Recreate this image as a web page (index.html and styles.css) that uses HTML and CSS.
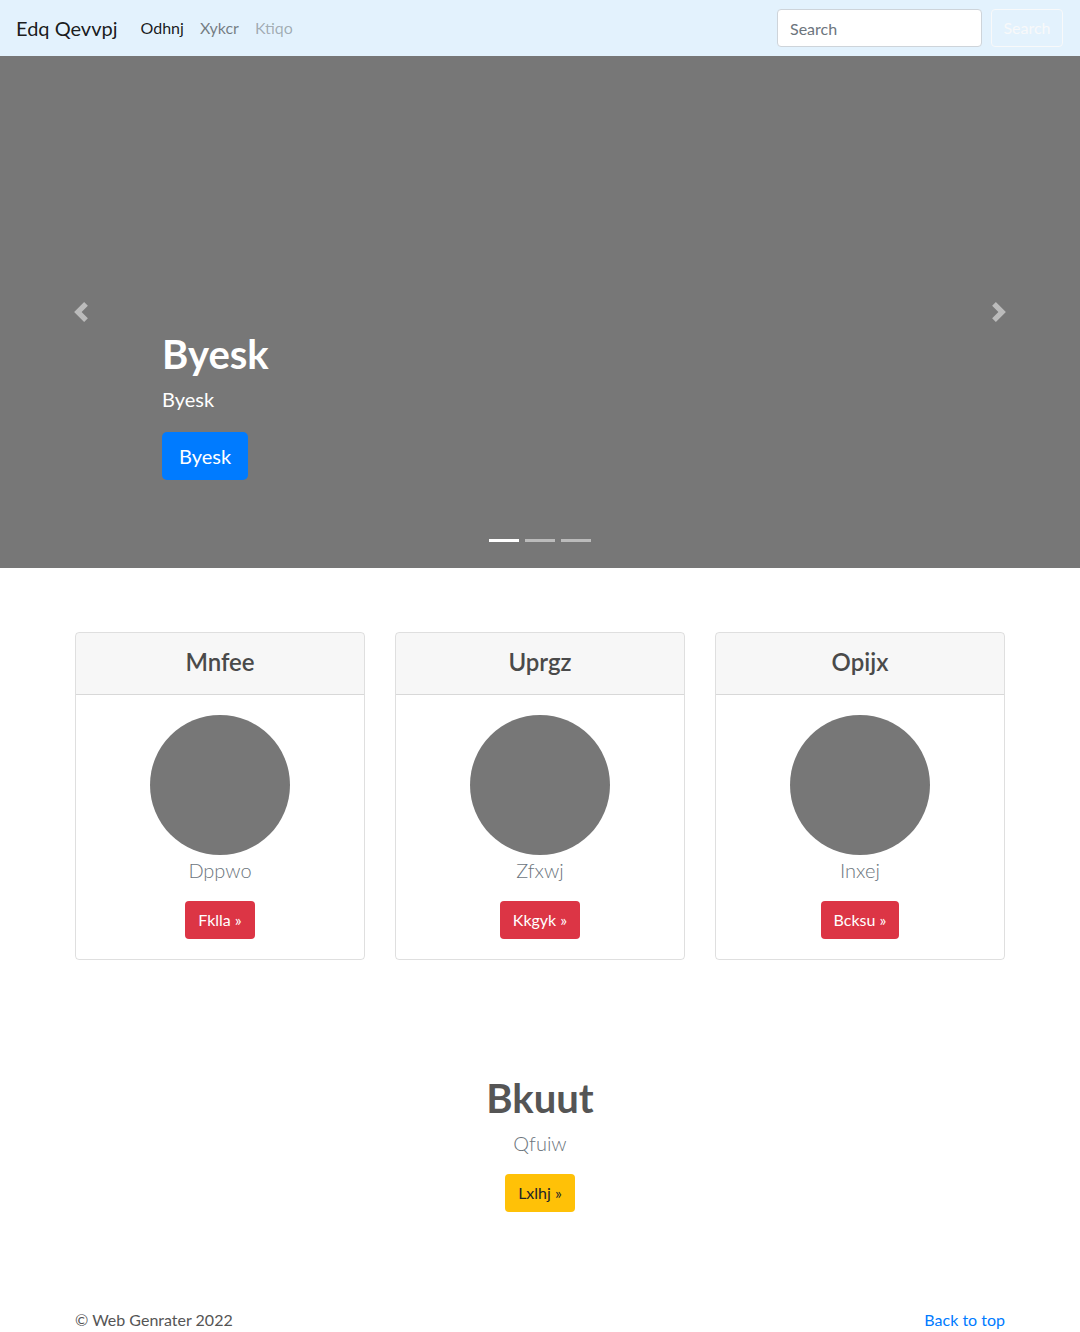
FILE: index.html
```html
<!DOCTYPE html>
<html lang="en">
<head>
<meta charset="utf-8">
<title>Edq Qevvpj</title>
<link rel="stylesheet" href="styles.css">
</head>
<body>
<nav class="navbar">
  <a class="brand" href="#">Edq Qevvpj</a>
  <ul class="nav">
    <li><a class="nav-link active" href="#">Odhnj</a></li>
    <li><a class="nav-link" href="#">Xykcr</a></li>
    <li><a class="nav-link disabled" href="#">Ktiqo</a></li>
  </ul>
  <form class="search">
    <input class="search-input" type="text" placeholder="Search">
    <button class="search-btn" type="button">Search</button>
  </form>
</nav>

<section class="carousel">
  <a class="control prev" href="#">
    <svg width="20" height="20" viewBox="0 0 8 8"><path fill="#fff" d="M5.25 0l-4 4 4 4 1.5-1.5L4.25 4l2.5-2.5L5.25 0z"/></svg>
  </a>
  <a class="control next" href="#">
    <svg width="20" height="20" viewBox="0 0 8 8"><path fill="#fff" d="M2.75 0l-1.5 1.5L3.75 4l-2.5 2.5L2.75 8l4-4-4-4z"/></svg>
  </a>
  <div class="caption">
    <h1 class="caption-title">Byesk</h1>
    <p class="caption-text">Byesk</p>
    <a class="btn btn-primary btn-lg" href="#">Byesk</a>
  </div>
  <ol class="indicators">
    <li class="ind active"></li>
    <li class="ind"></li>
    <li class="ind"></li>
  </ol>
</section>

<main class="container">
  <div class="cards">
    <div class="card">
      <div class="card-header"><h4 class="card-title">Mnfee</h4></div>
      <div class="card-body">
        <div class="circle"></div>
        <p class="lead">Dppwo</p>
        <a class="btn btn-danger" href="#">Fklla &raquo;</a>
      </div>
    </div>
    <div class="card">
      <div class="card-header"><h4 class="card-title">Uprgz</h4></div>
      <div class="card-body">
        <div class="circle"></div>
        <p class="lead">Zfxwj</p>
        <a class="btn btn-danger" href="#">Kkgyk &raquo;</a>
      </div>
    </div>
    <div class="card">
      <div class="card-header"><h4 class="card-title">Opijx</h4></div>
      <div class="card-body">
        <div class="circle"></div>
        <p class="lead">Inxej</p>
        <a class="btn btn-danger" href="#">Bcksu &raquo;</a>
      </div>
    </div>
  </div>

  <section class="feature">
    <h1 class="feature-title">Bkuut</h1>
    <p class="lead">Qfuiw</p>
    <a class="btn btn-warning" href="#">Lxlhj &raquo;</a>
  </section>

  <footer class="footer">
    <p class="copy">&copy; Web Genrater 2022</p>
    <a class="top-link" href="#">Back to top</a>
  </footer>
</main>
</body>
</html>
```

FILE: styles.css
```css
* { box-sizing: border-box; }
html, body { margin: 0; padding: 0; }
body {
  font-family: Lato, "Open Sans", "Liberation Sans", sans-serif;
  font-size: 16px;
  line-height: 1.5;
  color: #212529;
  background: #fff;
}
a { text-decoration: none; }

.navbar {
  height: 56px;
  background: #e3f2fd;
  display: flex;
  align-items: center;
  padding: 0 17px 0 16px;
}
.brand {
  font-size: 20px;
  line-height: 30px;
  color: rgba(0,0,0,.9);
  margin-right: 15px;
}
.nav {
  display: flex;
  list-style: none;
  margin: 0;
  padding: 0;
  flex: 1;
}
.nav-link {
  display: block;
  padding: 8px;
  color: rgba(0,0,0,.5);
}
.nav-link.active { color: rgba(0,0,0,.9); }
.nav-link.disabled { color: rgba(0,0,0,.3); }
.search { display: flex; align-items: center; gap: 9px; }
.search-input {
  width: 205px;
  height: 38px;
  padding: 6px 12px;
  font: inherit;
  font-size: 16px;
  border: 1px solid #ced4da;
  border-radius: 4px;
  background: #fff;
  color: #495057;
}
.search-input::placeholder { color: #6c757d; }
.search-btn {
  height: 38px;
  width: 72px;
  font: inherit;
  font-size: 16px;
  color: #f8f9fa;
  background: transparent;
  border: 1px solid #f8f9fa;
  border-radius: 4px;
  padding: 0 10px;
}

.carousel {
  position: relative;
  height: 512px;
  background: #777;
  margin-bottom: 64px;
}
.control {
  position: absolute;
  top: 0;
  bottom: 0;
  width: 15%;
  display: flex;
  align-items: center;
  justify-content: center;
  opacity: .5;
}
.control svg { display: block; }
.prev { left: 0; }
.next { right: 0; }
.caption {
  position: absolute;
  left: 15%;
  right: 15%;
  bottom: 68px;
  padding: 20px 0 20px 0;
  color: #fff;
}
.caption-title {
  margin: 0 0 6px;
  font-size: 40px;
  line-height: 48px;
  font-weight: 700;
}
.caption-text {
  margin: 0 0 18px;
  font-size: 20px;
  line-height: 30px;
}
.indicators {
  position: absolute;
  left: 0;
  right: 0;
  bottom: 21px;
  display: flex;
  justify-content: center;
  list-style: none;
  margin: 0;
  padding: 0;
}
.ind {
  width: 30px;
  height: 13px;
  margin: 0 3px;
  border-top: 5px solid transparent;
  border-bottom: 5px solid transparent;
  background: #fff;
  background-clip: padding-box;
  opacity: .5;
}
.ind.active { opacity: 1; }

.btn {
  display: inline-block;
  padding: 6px 12px;
  font-size: 16px;
  line-height: 24px;
  border-radius: 4px;
  border: 1px solid transparent;
  text-align: center;
}
.btn-lg {
  padding: 8px 16px;
  font-size: 20px;
  line-height: 30px;
  border-radius: 5px;
}
.btn-primary { background: #007bff; color: #fff; }
.btn-danger { background: #dc3545; color: #fff; }
.btn-warning { background: #ffc107; color: #212529; }

.container {
  width: 960px;
  margin: 0 auto;
  padding: 0 15px;
}
.cards {
  display: grid;
  grid-template-columns: repeat(3, 1fr);
  gap: 30px;
}
.card {
  border: 1px solid rgba(0,0,0,.125);
  border-radius: 4px;
  text-align: center;
  overflow: hidden;
}
.card-header {
  background: rgba(0,0,0,.03);
  border-bottom: 1px solid rgba(0,0,0,.125);
  padding: 14px 20px 18px;
}
.card-title {
  margin: 0;
  font-size: 24px;
  line-height: 29px;
  font-weight: 600;
  color: #4a4a4a;
}
.card-body {
  padding: 20px 20px 20px;
  display: flex;
  flex-direction: column;
  align-items: center;
}
.circle {
  width: 140px;
  height: 140px;
  border-radius: 50%;
  background: #777;
}
.lead {
  font-size: 20px;
  line-height: 30px;
  font-weight: 300;
  color: #6c757d;
  margin: 0 0 16px;
}

.feature {
  text-align: center;
  padding-top: 114px;
}
.feature-title {
  margin: 0 0 6px;
  font-size: 40px;
  line-height: 48px;
  font-weight: 700;
  color: #555;
}
.feature .lead { margin: 0 0 16px; }

.footer {
  display: flex;
  justify-content: space-between;
  align-items: center;
  margin-top: 96px;
}
.copy { margin: 0; color: #555; line-height: 24px; }
.top-link { color: #007bff; line-height: 24px; }
```
